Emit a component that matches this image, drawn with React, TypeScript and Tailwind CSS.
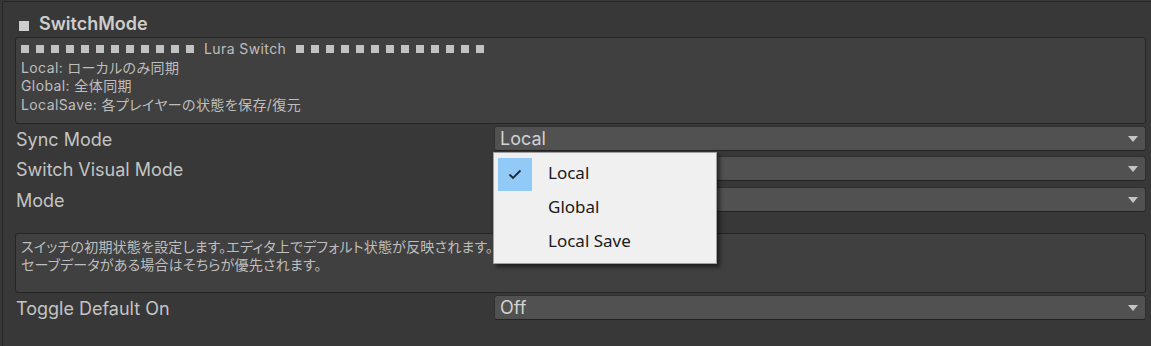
import React from "react";

const uiFont = { fontFamily: '"Inter", "Noto Sans CJK JP", sans-serif' };

function Arrow() {
  return (
    <svg width="10" height="6" viewBox="0 0 10 6" className="shrink-0">
      <path d="M0 0 H10 L5 6 Z" fill="#c4c4c4" />
    </svg>
  );
}

function Dropdown({ value }: { value: string }) {
  return (
    <div className="flex h-[25px] flex-1 items-center justify-between rounded-[3px] border border-[#303030] border-b-[#242424] bg-[#515151] pl-[5px] pr-[7px] text-[18px] leading-[22px] text-[#d2d2d2]">
      <span>{value}</span>
      <Arrow />
    </div>
  );
}

function Row({ label, value }: { label: string; value: string }) {
  return (
    <div className="flex h-[25px] items-center">
      <div className="w-[479px] shrink-0 pl-[1px] pt-[2px] text-[18px] leading-[22px] text-[#c4c4c4]">
        {label}
      </div>
      <Dropdown value={value} />
    </div>
  );
}

// small filled squares used as a divider in the help text
function Squares({ n }: { n: number }) {
  return (
    <span className="inline-flex gap-[7px] align-middle">
      {Array.from({ length: n }).map((_, i) => (
        <span key={i} className="inline-block h-[8px] w-[8px] bg-[#c2c2c2]" />
      ))}
    </span>
  );
}

export default function App() {
  return (
    <div
      className="relative h-[346px] w-[1151px] overflow-hidden bg-[#383838]"
      style={uiFont}
    >
      <div className="ml-[2px] mt-[1px] h-full border-l border-t border-[#262626] pl-[12px] pr-[5px]">
        <div className="flex items-center gap-[10px] pl-[4px] pt-[11px] text-[18px] font-semibold leading-[22px] text-[#cdcdcd]">
          <span className="mt-[3px] h-[10px] w-[10px] bg-[#cdcdcd]" />
          <span>SwitchMode</span>
        </div>

        <div className="mt-[2px] h-[87px] rounded-[3px] border border-[#252525] bg-[#404040] px-[5px] pt-[2px] text-[14px] leading-[18.5px] tracking-[0.4px] text-[#bebebe] [font-feature-settings:'palt']">
          <div className="flex items-center gap-[10px]">
            <Squares n={12} />
            <span>Lura Switch</span>
            <Squares n={13} />
          </div>
          <div>Local: ローカルのみ同期</div>
          <div>Global: 全体同期</div>
          <div>LocalSave: 各プレイヤーの状態を保存/復元</div>
        </div>

        <div className="mt-[2px] flex flex-col">
          <Row label="Sync Mode" value="Local" />
          <div className="mt-[5px]">
            <Row label="Switch Visual Mode" value="" />
          </div>
          <div className="mt-[6px]">
            <Row label="Mode" value="" />
          </div>
        </div>

        <div className="mt-[21px] h-[60px] rounded-[3px] border border-[#252525] bg-[#404040] px-[5px] pt-[4px] text-[14px] leading-[18px] tracking-[0.2px] text-[#bebebe] [font-feature-settings:'palt']">
          <div>スイッチの初期状態を設定します。エディタ上でデフォルト状態が反映されます。</div>
          <div>セーブデータがある場合はそちらが優先されます。</div>
        </div>

        <div className="mt-[2px]">
          <Row label="Toggle Default On" value="Off" />
        </div>
      </div>

      <div
        className="absolute left-[493px] top-[152px] w-[224px] border border-[#a0a0a0] bg-[#f0f0f0] py-[4px] pl-[4px] shadow-[3px_3px_4px_rgba(0,0,0,0.5)]"
        style={{ fontFamily: '"Noto Sans", "Open Sans", sans-serif' }}
      >
        {[
          { label: "Local", checked: true },
          { label: "Global", checked: false },
          { label: "Local Save", checked: false },
        ].map((item) => (
          <div key={item.label} className="flex h-[34px] items-center">
            <div
              className={`flex h-[33px] w-[34px] items-center justify-center ${
                item.checked ? "bg-[#91c9f7]" : ""
              }`}
            >
              {item.checked ? (
                <svg width="14" height="11" viewBox="0 0 14 11">
                  <path
                    d="M1.5 5.5 L5 9 L12.5 1.5"
                    fill="none"
                    stroke="#1e2a3a"
                    strokeWidth="1.8"
                  />
                </svg>
              ) : null}
            </div>
            <span className="ml-[16px] pb-[2px] text-[17px] text-[#1a1a1a]">
              {item.label}
            </span>
          </div>
        ))}
      </div>
    </div>
  );
}
